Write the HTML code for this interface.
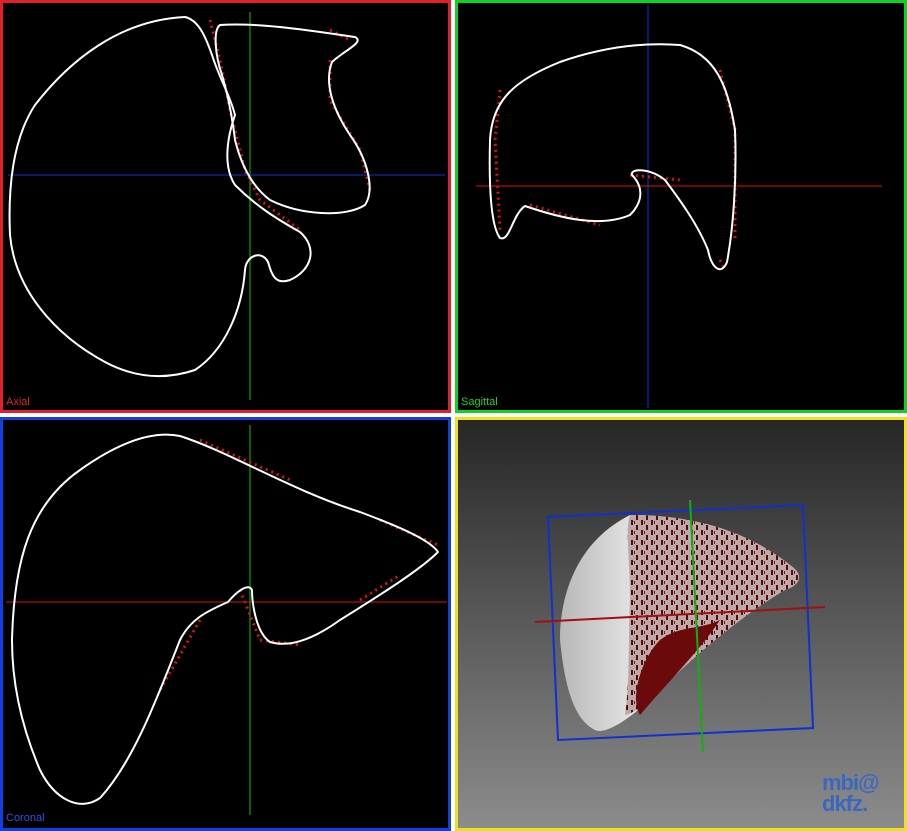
<!DOCTYPE html>
<html><head><style>
body{margin:0;width:907px;height:831px;background:#fff;position:relative;overflow:hidden;font-family:"Liberation Sans",sans-serif}
.p{position:absolute;box-sizing:border-box;border:3px solid;background:#000}
svg{position:absolute;left:0;top:0}
.l{position:absolute;font-size:11px}
</style></head><body>
<div class="p" style="left:0;top:0;width:451px;height:413px;border-color:#e0202a"></div>
<div class="p" style="left:455px;top:0;width:452px;height:413px;border-color:#10d020"></div>
<div class="p" style="left:0;top:417px;width:451px;height:414px;border-color:#1040e0"></div>
<div class="p" style="left:455px;top:417px;width:452px;height:414px;border-color:#f0e020;background:linear-gradient(#262626,#5a5a5a 50%,#8c8c8c)"></div>
<svg width="907" height="831">
<g stroke-width="1">
<line x1="250" y1="12" x2="250" y2="400" stroke="#10c010"/>
<line x1="8" y1="175" x2="445" y2="175" stroke="#1030e0"/>
<line x1="648" y1="5" x2="648" y2="408" stroke="#1030e0"/>
<line x1="476" y1="186" x2="882" y2="186" stroke="#e01010"/>
<line x1="250" y1="425" x2="250" y2="815" stroke="#10c010"/>
<line x1="6" y1="602" x2="447" y2="602" stroke="#e01010"/>
</g>
<g fill="none" stroke="#e01010" stroke-width="3" stroke-dasharray="2 4">
<path d="M210,20 L220,60 L230,110 L245,170 L260,200 L300,230 M330,30 L350,40 M330,60 L330,100 L360,150 L370,190"/>
<path d="M500,90 L495,140 L500,230 M530,205 L600,225 M630,175 L680,180 M720,70 L735,130 L735,240 M720,260 L725,270"/>
<path d="M200,620 L160,690 M240,590 L260,640 L300,645 M360,600 L400,575 M380,520 L438,545 M200,440 L290,480"/>
</g>
<g fill="none" stroke="#fff" stroke-width="2" stroke-linejoin="round">
<path d="M185,17 C120,20 70,60 35,105 C12,140 8,190 10,235 C15,290 55,335 105,362 C135,378 165,380 195,370 C225,350 242,310 245,270 C246,255 262,250 268,262 C272,275 275,285 290,280 C312,270 318,248 300,232 C275,218 255,205 235,185 C222,165 228,135 235,115 C230,95 220,80 212,55 C205,35 198,20 185,17Z"/>
<path d="M220,25 C260,22 320,32 355,37 C365,42 345,50 332,62 C325,80 330,105 350,135 C368,160 375,190 365,205 C345,218 300,215 270,200 C250,185 240,160 235,140 C232,115 228,95 222,75 C215,55 213,30 220,25Z"/>
<path d="M490,140 C492,100 515,80 560,62 C600,48 640,42 680,45 C715,55 728,85 735,130 C737,180 733,230 727,262 C722,275 712,270 708,250 C698,225 680,200 665,180 C650,168 630,168 632,175 C642,185 645,200 630,215 C600,228 560,218 525,206 C512,215 510,242 500,238 C490,225 489,180 490,140Z"/>
<path d="M12,640 C14,560 30,505 80,470 C115,445 150,430 180,436 C230,452 290,490 360,512 C400,527 430,540 438,552 C420,570 380,595 340,620 C315,638 290,648 270,642 C255,632 252,600 252,590 C249,583 238,590 228,602 C205,612 190,620 180,640 C160,690 135,760 100,798 C80,812 55,800 40,770 C25,735 12,690 12,640Z"/>
</g>
<path d="M548,517 L803,505 L813,728 L558,740Z" fill="none" stroke="#1030d0" stroke-width="2"/>
<defs><linearGradient id="g" x1="0" x2="1"><stop offset="0" stop-color="#b8b8b8"/><stop offset=".4" stop-color="#f0f0f0"/><stop offset="1" stop-color="#c0c0c0"/></linearGradient>
<pattern id="d" width="10" height="10" patternUnits="userSpaceOnUse"><rect width="10" height="10" fill="#bcaaaa"/><rect x="1" y="0" width="2" height="5" fill="#5a0808"/><rect x="6" y="5" width="2" height="5" fill="#5a0808"/><rect x="4" y="1" width="1" height="3" fill="#7a1010"/></pattern></defs>
<path d="M630,515 C680,515 740,525 790,565 C805,575 800,585 785,590 C750,610 700,650 660,690 C630,720 605,735 595,730 C575,720 565,690 560,640 C560,590 580,540 630,515Z" fill="url(#g)"/>
<path d="M630,515 C680,515 740,525 790,565 C805,575 800,585 785,590 C750,610 700,650 660,690 C645,705 630,715 625,715 C630,680 628,640 630,600 C630,560 625,530 630,515Z" fill="url(#d)"/>
<path d="M660,640 C680,625 700,630 720,620 C700,650 670,680 640,715 C630,700 640,660 660,640Z" fill="#6a0a0a"/>
<line x1="535" y1="622" x2="825" y2="607" stroke="#a01010" stroke-width="2"/>
<line x1="690" y1="500" x2="703" y2="752" stroke="#10b010" stroke-width="2"/>
</svg>
<div class="l" style="left:6px;top:396px;color:#e02020">Axial</div>
<div class="l" style="left:461px;top:396px;color:#20d020">Sagittal</div>
<div class="l" style="left:6px;top:812px;color:#3050e0">Coronal</div>
<div style="position:absolute;left:822px;top:772px;color:#3a68c0;font-weight:bold;font-size:22px;line-height:21px;letter-spacing:-1px">mbi@<br>dkfz.</div>
</body></html>
